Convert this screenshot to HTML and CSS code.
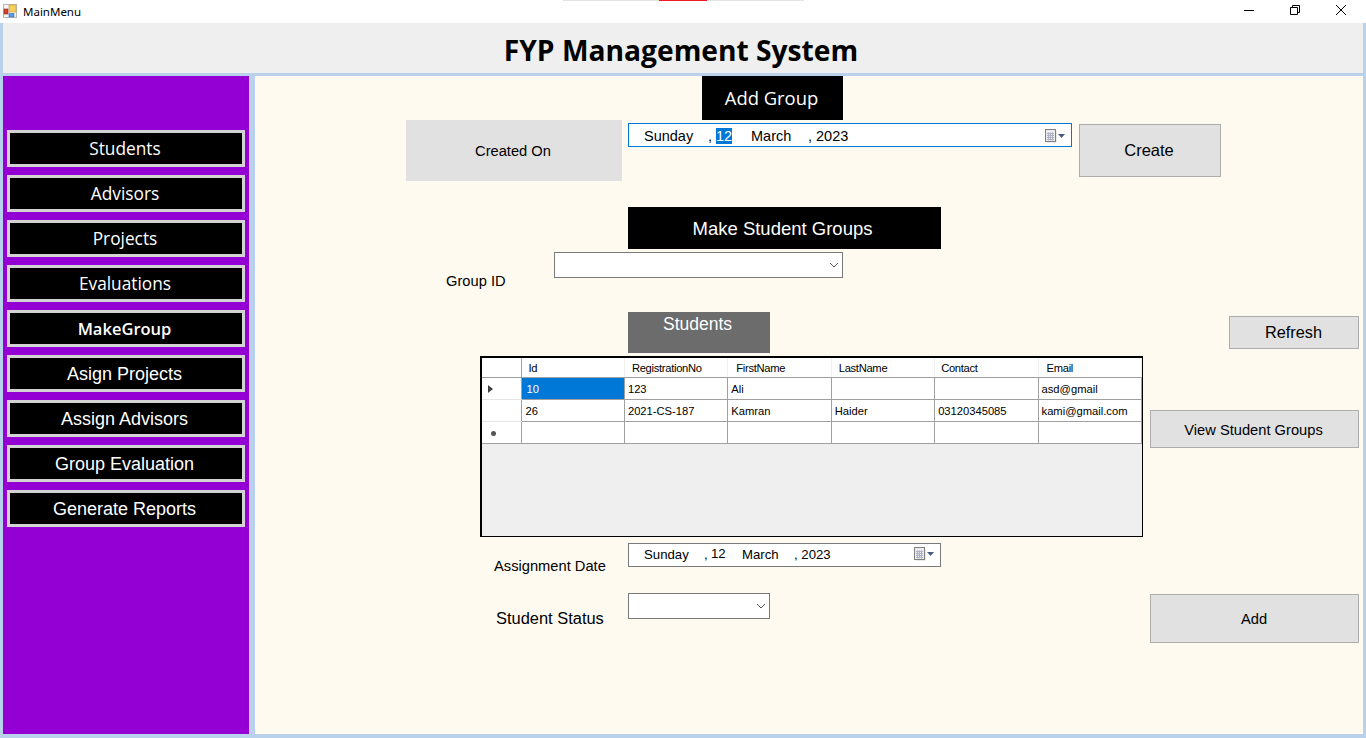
FILE: index.html
```html
<!DOCTYPE html>
<html lang="en">
<head>
  <meta charset="UTF-8">
  <meta name="viewport" content="width=device-width, initial-scale=1.0">
  <title>MainMenu</title>
  <link rel="stylesheet" href="styles.css">
</head>
<body>
  <div class="titlebar">
    <svg class="app-icon" width="14" height="14" viewBox="0 0 14 14">
      <rect x="0.5" y="0.5" width="13" height="13" fill="#f4f4f4" stroke="#b8b8b8"/>
      <rect x="6" y="1" width="7" height="7" fill="#f7cf5e" stroke="#c49a2c" stroke-width="0.6"/>
      <rect x="1" y="5" width="4" height="5" fill="#d8402c" stroke="#8a2c20" stroke-width="0.6"/>
      <rect x="6" y="9.500" width="5" height="3.500" fill="#5c9ae6" stroke="#3a6eb0" stroke-width="0.6"/>
    </svg>
    <span class="app-title">MainMenu</span>
    <div class="top-strip"><span class="top-strip-red"></span></div>
    <div class="win-buttons">
      <svg width="12" height="12" viewBox="0 0 12 12"><path d="M1 6.5h10" stroke="#000" fill="none"/></svg>
      <svg width="12" height="12" viewBox="0 0 12 12"><path d="M1.5 3.5h7v7h-7zM3.500 3.500v-2h7v7h-2" stroke="#000" fill="none"/></svg>
      <svg width="12" height="12" viewBox="0 0 12 12"><path d="M1 1l10 10M11 1L1 11" stroke="#000" fill="none"/></svg>
    </div>
  </div>

  <div class="window">
    <header class="header"><h1>FYP Management System</h1></header>

    <div class="main">
      <nav class="sidebar">
        <button class="nav-btn light">Students</button>
        <button class="nav-btn light">Advisors</button>
        <button class="nav-btn light">Projects</button>
        <button class="nav-btn light">Evaluations</button>
        <button class="nav-btn semi">MakeGroup</button>
        <button class="nav-btn">Asign Projects</button>
        <button class="nav-btn">Assign Advisors</button>
        <button class="nav-btn">Group Evaluation</button>
        <button class="nav-btn">Generate Reports</button>
      </nav>

      <section class="content">
        <div class="row row-addgroup">
          <div class="heading heading-add">Add Group</div>
        </div>

        <div class="row row-created">
          <div class="created-label">Created On</div>
          <div class="datepick datepick-focus">
            <span class="d-day">Sunday</span><span class="d-sep">,</span><span class="d-num selected">12</span><span class="d-month">March</span><span class="d-sep2">, 2023</span>
            <svg class="cal-icon" width="22" height="14" viewBox="0 0 22 14">
              <rect x="1.500" y="1.500" width="10" height="12" fill="#d8d8d8"/>
              <rect x="0.5" y="0.5" width="10" height="12" fill="#ececec" stroke="#808080"/>
              <path d="M2 4.500h7M2 6.500h7M2 8.500h7M2 10.500h7M3.500 3.500v8M5.500 3.500v8M7.500 3.500v8" stroke="#aeb2c6" fill="none"/>
              <path d="M13 5h7l-3.500 4z" fill="#4a5a80"/>
            </svg>
          </div>
          <button class="btn btn-create">Create</button>
        </div>

        <div class="row row-make">
          <div class="heading heading-make">Make Student Groups</div>
        </div>

        <div class="row row-groupid">
          <label class="lbl lbl-group">Group ID</label>
          <div class="combo combo-group">
            <svg width="10" height="6" viewBox="0 0 10 6"><path d="M1 1l4 4 4-4" stroke="#555" fill="none"/></svg>
          </div>
        </div>

        <div class="row row-students">
          <div class="heading heading-students">Students</div>
          <button class="btn btn-refresh">Refresh</button>
        </div>

        <div class="row row-grid">
          <div class="grid-box">
            <table class="grid">
              <thead>
                <tr>
                  <th class="rowhead"></th>
                  <th>Id</th>
                  <th>RegistrationNo</th>
                  <th>FirstName</th>
                  <th>LastName</th>
                  <th>Contact</th>
                  <th>Email</th>
                </tr>
              </thead>
              <tbody>
                <tr>
                  <td class="rowhead"><span class="arrow"></span></td>
                  <td class="selected">10</td>
                  <td>123</td>
                  <td>Ali</td>
                  <td></td>
                  <td></td>
                  <td>asd@gmail</td>
                </tr>
                <tr>
                  <td class="rowhead"></td>
                  <td>26</td>
                  <td>2021-CS-187</td>
                  <td>Kamran</td>
                  <td>Haider</td>
                  <td>03120345085</td>
                  <td>kami@gmail.com</td>
                </tr>
                <tr>
                  <td class="rowhead"><span class="newrow"></span></td>
                  <td></td>
                  <td></td>
                  <td></td>
                  <td></td>
                  <td></td>
                  <td></td>
                </tr>
              </tbody>
            </table>
          </div>
          <button class="btn btn-view">View Student Groups</button>
        </div>

        <div class="row row-assign">
          <label class="lbl lbl-assign">Assignment Date</label>
          <div class="datepick datepick-small">
            <span class="d-day">Sunday</span><span class="d-sep">,</span><span class="d-num">12</span><span class="d-month">March</span><span class="d-sep2">, 2023</span>
            <svg class="cal-icon" width="22" height="14" viewBox="0 0 22 14">
              <rect x="1.500" y="1.500" width="10" height="12" fill="#d8d8d8"/>
              <rect x="0.5" y="0.5" width="10" height="12" fill="#ececec" stroke="#808080"/>
              <path d="M2 4.500h7M2 6.500h7M2 8.500h7M2 10.500h7M3.500 3.500v8M5.500 3.500v8M7.500 3.500v8" stroke="#aeb2c6" fill="none"/>
              <path d="M13 5h7l-3.500 4z" fill="#4a5a80"/>
            </svg>
          </div>
        </div>

        <div class="row row-status">
          <label class="lbl lbl-status">Student Status</label>
          <div class="combo combo-status">
            <svg width="10" height="6" viewBox="0 0 10 6"><path d="M1 1l4 4 4-4" stroke="#555" fill="none"/></svg>
          </div>
          <button class="btn btn-add">Add</button>
        </div>
      </section>
    </div>
  </div>
</body>
</html>
```

FILE: styles.css
```css
* {
  box-sizing: border-box;
}
html, body {
  margin: 0;
  height: 100%;
  overflow: hidden;
}
body {
  font-family: "Liberation Sans", Arial, sans-serif;
  background-color: #b9d1ea;
  color: #000;
}
button {
  font-family: inherit;
  cursor: pointer;
}

/* title bar */
.titlebar {
  height: 23px;
  background-color: #fff;
  display: flex;
  align-items: center;
  position: relative;
  padding-left: 3px;
}
.app-icon {
  margin-top: -1px;
}
.app-title {
  font-family: "Noto Sans", sans-serif;
  font-size: 11.5px;
  margin-left: 6px;
  margin-top: -1px;
}
.top-strip {
  position: absolute;
  left: 563px;
  top: 0;
  width: 241px;
  height: 1px;
  background-color: #e3e3e3;
}
.top-strip-red {
  display: block;
  width: 48px;
  height: 1px;
  margin-left: 96px;
  background-color: #ed1c24;
}
.win-buttons {
  margin-left: auto;
  display: flex;
  gap: 34px;
  padding-right: 19px;
  margin-top: -3px;
}

/* window body */
.window {
  padding: 0 3px;
}
.header {
  height: 50px;
  background-color: #efefef;
  display: flex;
  align-items: center;
  justify-content: center;
}
.header h1 {
  font-family: "Open Sans", sans-serif;
  font-size: 28.200px;
  font-weight: 700;
  margin: 4px 4px 0 0;
}
.main {
  display: flex;
  margin-top: 3px;
  height: 658px;
}

/* sidebar */
.sidebar {
  width: 246px;
  background-color: #9400d3;
  padding: 54px 4px 0 4px;
  display: flex;
  flex-direction: column;
  gap: 8px;
}
.nav-btn {
  height: 37px;
  width: 238px;
  background-color: #000;
  color: #fff;
  border: 3px solid #d3d3d3;
  outline: 0;
  font-size: 18px;
  padding: 2px 3px 0 0;
}
.nav-btn.light {
  font-family: "Open Sans", sans-serif;
  font-weight: 400;
  font-size: 17.300px;
  padding: 0 2px 0 0;
}
.nav-btn.semi {
  font-family: "Open Sans", sans-serif;
  font-weight: 600;
  font-size: 16.500px;
  padding: 0 3px 0 0;
}

/* content */
.content {
  flex: 1;
  margin-left: 6px;
  background-color: #fffaf0;
}
.row {
  display: flex;
  align-items: flex-start;
}
.heading {
  background-color: #000;
  color: #fff;
  display: flex;
  justify-content: center;
  align-items: center;
}
.row-addgroup {
  padding-left: 447px;
}
.heading-add {
  width: 141px;
  height: 44px;
  font-family: "Open Sans", sans-serif;
  font-size: 18.400px;
  padding: 0 2px 2px 0;
}
.row-created {
  padding-left: 151px;
}
.created-label {
  width: 216px;
  height: 61px;
  background-color: #e1e1e1;
  font-size: 14.700px;
  display: flex;
  align-items: center;
  justify-content: center;
  padding-right: 2px;
}

/* date pickers */
.datepick {
  background-color: #fff;
  display: flex;
  align-items: center;
  position: relative;
  white-space: pre;
}
.datepick-focus {
  width: 444px;
  height: 24px;
  margin: 3px 0 0 6px;
  border: 1px solid #0078d7;
  font-size: 14.500px;
  padding: 1px 0 0 15px;
}
.datepick-small {
  width: 313px;
  height: 24px;
  border: 1px solid #7a7a7a;
  font-size: 13.200px;
  padding: 0 0 2px 15px;
}
.d-day {
  width: 49px;
}
.d-sep {
  margin-left: 15px;
  width: 8px;
}
.d-num {
  width: 16px;
  height: 16px;
  line-height: 16px;
}
.d-month {
  margin-left: 19px;
  width: 57px;
}
.datepick-small .d-day {
  width: 46px;
}
.datepick-small .d-sep {
  width: 7px;
  margin-left: 14px;
}
.datepick-small .d-month {
  margin-left: 15px;
  width: 52px;
}
.selected {
  background-color: #0078d7;
  color: #fff;
}
.cal-icon {
  margin-left: auto;
  margin-right: 4px;
}

/* buttons */
.btn {
  background-color: #e1e1e1;
  border: 1px solid #adadad;
  color: #000;
  padding: 0;
}
.btn-create {
  width: 142px;
  height: 53px;
  margin: 4px 0 0 7px;
  font-size: 16.500px;
  padding-right: 2px;
}
.row-make {
  padding-left: 373px;
  margin-top: 26px;
}
.heading-make {
  width: 313px;
  height: 42px;
  font-size: 18.500px;
  padding: 1px 4px 0 0;
}
.row-groupid {
  padding-left: 191px;
  margin-top: 3px;
}
.lbl {
  font-size: 14.700px;
}
.lbl-group {
  width: 108px;
  margin-top: 21px;
}
.combo {
  background-color: #fff;
  border: 1px solid #7a7a7a;
  height: 26px;
  display: flex;
  align-items: center;
  justify-content: flex-end;
  padding-right: 3px;
}
.combo-group {
  width: 289px;
}
.row-students {
  padding-left: 373px;
  margin-top: 23px;
}
.heading-students {
  width: 142px;
  height: 41px;
  background-color: #6c6c6c;
  font-size: 17.500px;
  align-items: flex-start;
  padding: 2px 3px 0 0;
}
.btn-refresh {
  width: 130px;
  height: 33px;
  margin: 4px 0 0 459px;
  font-size: 16.300px;
  padding-right: 1px;
}

/* student table */
.row-grid {
  padding-left: 225px;
  margin-top: 3px;
}
.grid-box {
  width: 663px;
  height: 181px;
  border-style: solid;
  border-color: #000;
  border-width: 2px 1px 1px 2px;
  background-color: #efefef;
}
.grid {
  border-collapse: collapse;
  table-layout: fixed;
  width: 660px;
  font-size: 11.200px;
}
.grid th, .grid td {
  height: 22px;
  padding: 1px 0 0 3px;
  text-align: left;
  background-color: #fff;
  border-right: 1px solid #a0a0a0;
  border-bottom: 1px solid #a0a0a0;
  white-space: nowrap;
  overflow: hidden;
  font-weight: 400;
}
.grid td:nth-child(2) {
  padding-left: 4px;
}
.grid td.selected {
  background-color: #0078d7;
  color: #fff;
  padding-left: 5px;
}
.grid th {
  height: 19px;
  padding-left: 7px;
  letter-spacing: -0.3px;
  border-right-color: #f0f0f0;
}
.grid th:nth-child(4), .grid th:nth-child(7) {
  padding-left: 8px;
}
.grid th:nth-child(6) {
  padding-left: 6px;
}
.grid .rowhead {
  width: 39px;
  padding: 0 0 0 6px;
  border-right-color: #a0a0a0;
  border-bottom-color: #e6e6e6;
}
.grid th.rowhead {
  border-bottom-color: #a0a0a0;
}
.grid tbody tr:last-child .rowhead {
  border-bottom-color: #a0a0a0;
}
.arrow {
  display: block;
  width: 0;
  height: 0;
  margin-top: 2px;
  border-left: 5px solid #404040;
  border-top: 4px solid transparent;
  border-bottom: 4px solid transparent;
}
.newrow {
  display: block;
  width: 5px;
  height: 5px;
  margin: 3px 0 0 3px;
  border-radius: 50%;
  background-color: #555;
}
.btn-view {
  width: 209px;
  height: 38px;
  margin: 54px 0 0 7px;
  font-size: 14.700px;
  padding: 1px 2px 0 0;
}

.row-assign {
  padding-left: 239px;
  margin-top: 6px;
}
.lbl-assign {
  width: 134px;
  margin-top: 15px;
}
.row-status {
  padding-left: 241px;
  margin-top: 19px;
}
.lbl-status {
  width: 132px;
  font-size: 16.450px;
  margin-top: 16px;
}
.combo-status {
  width: 142px;
}
.btn-add {
  width: 209px;
  height: 49px;
  margin: 1px 0 0 380px;
  font-size: 14.700px;
  padding-right: 1px;
}
```
